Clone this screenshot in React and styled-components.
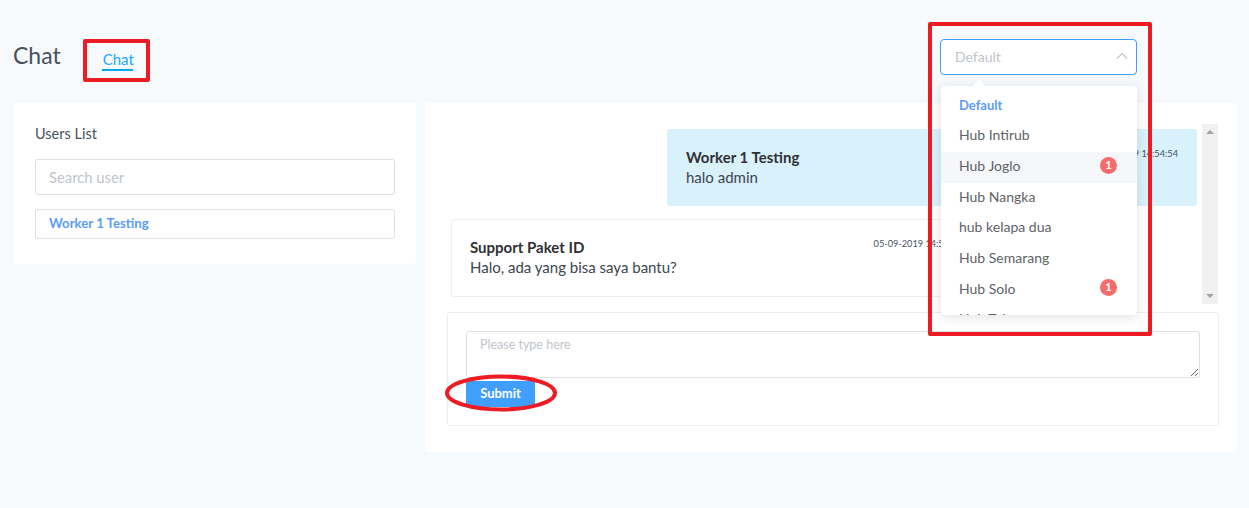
import * as React from "react";
import styled, { createGlobalStyle } from "styled-components";

const hubs = [
  { name: "Default", active: true },
  { name: "Hub Intirub" },
  { name: "Hub Joglo", badge: 1, hover: true },
  { name: "Hub Nangka" },
  { name: "hub kelapa dua" },
  { name: "Hub Semarang" },
  { name: "Hub Solo", badge: 1 },
  { name: "Hub Tebet" },
];

export default function App() {
  return (
    <Page>
      <GlobalStyle />
      <Header>
        <Title>Chat</Title>
        <Tab>Chat</Tab>
        <SelectWrap>
          <SelectBox>
            <span>Default</span>
            <svg width="12" height="12" viewBox="0 0 12 12" fill="none" stroke="#c0c4cc" strokeWidth="1.2">
              <path d="M1 8.5 L6 3.5 L11 8.5" />
            </svg>
          </SelectBox>
          <MenuArrow />
          <Menu>
            {hubs.map((hub) => (
              <MenuItem key={hub.name} $active={hub.active} $hover={hub.hover}>
                {hub.name}
                {hub.badge && <Badge>{hub.badge}</Badge>}
              </MenuItem>
            ))}
          </Menu>
        </SelectWrap>
      </Header>
      <Columns>
        <UsersPanel>
          <PanelTitle>Users List</PanelTitle>
          <SearchInput placeholder="Search user" />
          <UserRow>Worker 1 Testing</UserRow>
        </UsersPanel>
        <ChatPanel>
          <MessagesArea>
            <Messages>
              <Message $mine>
                <Time>05-09-2019 14:54:54</Time>
                <Sender>Worker 1 Testing</Sender>
                <Body>halo admin</Body>
              </Message>
              <Message>
                <Time>05-09-2019 14:54:54</Time>
                <Sender>Support Paket ID</Sender>
                <Body>Halo, ada yang bisa saya bantu?</Body>
              </Message>
            </Messages>
            <ScrollTrack>
              <ArrowUp />
              <ArrowDown />
            </ScrollTrack>
          </MessagesArea>
          <ReplyCard>
            <ReplyInput placeholder="Please type here" />
            <SubmitButton>Submit</SubmitButton>
          </ReplyCard>
        </ChatPanel>
      </Columns>

      <TabMark />
      <SelectMark />
      <SubmitMark width="114" height="40" viewBox="0 0 114 40">
        <ellipse cx="57" cy="20" rx="54" ry="16.5" fill="none" stroke="#ed1c24" strokeWidth="4" />
      </SubmitMark>
    </Page>
  );
}

const GlobalStyle = createGlobalStyle`
  html, body {
    margin: 0;
    padding: 0;
    background: #f6fafd;
  }
  * {
    box-sizing: border-box;
  }
`;

const Page = styled.div`
  position: relative;
  width: 1249px;
  height: 508px;
  overflow: hidden;
  padding: 39px 12px 0 13px;
  font-family: "Lato", "Noto Sans", sans-serif;
  color: #606266;
`;

const Header = styled.header`
  display: flex;
  align-items: flex-start;
  height: 64px;
  padding-right: 100px;
`;

const Title = styled.h1`
  margin: 2px 0 0;
  font-size: 23px;
  line-height: 28px;
  font-weight: 400;
  color: #47525e;
`;

const Tab = styled.div`
  margin: 11px 0 0 41px;
  width: 31px;
  height: 21px;
  padding-left: 1px;
  border-bottom: 2px solid #00a8f0;
  font-size: 15px;
  line-height: 18px;
  color: #1fa9f4;
  text-align: center;
`;

const SelectWrap = styled.div`
  position: relative;
  margin-left: auto;
  width: 197px;
`;

const SelectBox = styled.div`
  display: flex;
  align-items: center;
  justify-content: space-between;
  height: 36px;
  padding: 0 8px 2px 14px;
  background: #fff;
  border: 1px solid #409eff;
  border-radius: 4px;
  font-size: 14px;
  color: #c0c4cc;
`;

const MenuArrow = styled.div`
  position: absolute;
  top: 41px;
  left: 33px;
  width: 0;
  height: 0;
  border-left: 6px solid transparent;
  border-right: 6px solid transparent;
  border-bottom: 6px solid #fff;
  z-index: 3;
`;

const Menu = styled.ul`
  position: absolute;
  top: 47px;
  left: 1px;
  right: 0;
  height: 229px;
  margin: 0;
  padding: 4.5px 0 0;
  overflow: hidden;
  list-style: none;
  background: #fff;
  border-radius: 4px;
  box-shadow: 0 2px 12px rgba(0, 0, 0, 0.12);
  z-index: 2;
`;

const MenuItem = styled.li`
  position: relative;
  height: 30.7px;
  padding: 0 18px;
  font-size: ${(props) => (props.$active ? "13px" : "14px")};
  line-height: 28.6px;
  font-weight: ${(props) => (props.$active ? 700 : 400)};
  color: ${(props) => (props.$active ? "#5b9cf8" : "#606266")};
  background: ${(props) => (props.$hover ? "#f5f7fa" : "transparent")};
`;

const Badge = styled.span`
  position: absolute;
  top: 4.7px;
  right: 20px;
  width: 17px;
  height: 17px;
  border-radius: 50%;
  background: #f56c6c;
  color: #fff;
  font-size: 11px;
  font-weight: 700;
  line-height: 16px;
  text-align: center;
`;

const Columns = styled.div`
  display: flex;
  align-items: flex-start;
  gap: 9px;
`;

const UsersPanel = styled.section`
  width: 403px;
  height: 161px;
  padding: 22px 21px 22px 22px;
  background: #fff;
  border-radius: 3px;
`;

const PanelTitle = styled.div`
  font-size: 14.5px;
  line-height: 18px;
  color: #47525e;
`;

const SearchInput = styled.input`
  display: block;
  width: 100%;
  height: 36px;
  margin-top: 16px;
  padding: 0 13px 1px;
  border: 1px solid #dcdfe6;
  border-radius: 3px;
  font: 14.8px "Lato", "Noto Sans", sans-serif;
  outline: none;

  &::placeholder {
    color: #c0c4cc;
    opacity: 1;
  }
`;

const UserRow = styled.div`
  height: 30px;
  margin-top: 14px;
  padding: 0 13px;
  border: 1px solid #dcdfe6;
  border-radius: 3px;
  font-size: 13.2px;
  font-weight: 700;
  line-height: 26px;
  color: #5b9cf8;
`;

const ChatPanel = styled.section`
  width: 812px;
  height: 349px;
  padding: 21px 18px 0 22px;
  background: #fff;
  border-radius: 3px;
`;

const MessagesArea = styled.div`
  display: flex;
  height: 180px;
  margin-right: 1px;
  overflow: hidden;
`;

const Messages = styled.div`
  flex: 1;
  min-width: 0;
  display: flex;
  flex-direction: column;
  padding: 5px 5px 0 4px;
  gap: 13px;
`;

const Message = styled.article`
  position: relative;
  flex: none;
  align-self: ${(props) => (props.$mine ? "flex-end" : "flex-start")};
  width: 530px;
  height: ${(props) => (props.$mine ? "77px" : "78px")};
  padding: 18px;
  background: ${(props) => (props.$mine ? "#d9f1fb" : "#fff")};
  border: 1px solid ${(props) => (props.$mine ? "#d9f1fb" : "#ebeef5")};
  border-radius: 3px;
`;

const Time = styled.div`
  position: absolute;
  top: 18px;
  right: 18px;
  font-size: 9.2px;
  line-height: 12px;
  color: #47525e;
`;

const Sender = styled.div`
  font-size: 15px;
  line-height: 19px;
  font-weight: 700;
  color: #303133;
`;

const Body = styled.div`
  font-size: 15px;
  line-height: 21px;
  color: #3c4650;
`;

const ScrollTrack = styled.div`
  flex: none;
  display: flex;
  flex-direction: column;
  justify-content: space-between;
  align-items: center;
  width: 16px;
  padding: 6px 0;
  background: #f0f0f0;
`;

const ArrowUp = styled.div`
  width: 0;
  height: 0;
  border-left: 4px solid transparent;
  border-right: 4px solid transparent;
  border-bottom: 4px solid #a3a3a3;
`;

const ArrowDown = styled.div`
  width: 0;
  height: 0;
  border-left: 4px solid transparent;
  border-right: 4px solid transparent;
  border-top: 4px solid #a3a3a3;
`;

const ReplyCard = styled.div`
  width: 772px;
  height: 114px;
  margin-top: 8px;
  padding: 18px 18px 0 18px;
  border: 1px solid #ebeef5;
  border-radius: 3px;
`;

const ReplyInput = styled.textarea`
  display: block;
  width: 734px;
  height: 47px;
  padding: 5px 13px;
  border: 1px solid #dcdfe6;
  border-radius: 3px;
  font: 12.5px/16px "Lato", "Noto Sans", sans-serif;
  outline: none;

  &::placeholder {
    color: #c0c4cc;
    opacity: 1;
  }
`;

const SubmitButton = styled.button`
  display: block;
  width: 69px;
  height: 26px;
  margin-top: 3px;
  padding: 0 0 2px;
  border: 0;
  background: #409eff;
  color: #fff;
  font: 700 13px "Lato", "Noto Sans", sans-serif;
`;

const TabMark = styled.div`
  position: absolute;
  left: 83px;
  top: 39px;
  width: 67px;
  height: 43px;
  border: 4px solid #ed1c24;
  border-radius: 2px;
  z-index: 5;
`;

const SelectMark = styled.div`
  position: absolute;
  left: 928px;
  top: 22px;
  width: 224px;
  height: 314px;
  border: 4px solid #ed1c24;
  border-radius: 2px;
  z-index: 5;
`;

const SubmitMark = styled.svg`
  position: absolute;
  left: 444px;
  top: 373px;
  z-index: 5;
`;
